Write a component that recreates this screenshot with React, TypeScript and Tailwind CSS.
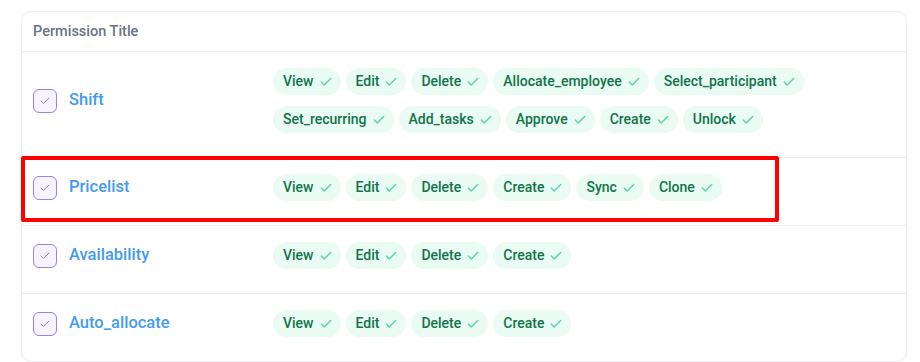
import { Check } from 'lucide-react';

type Permission = {
  title: string;
  actions: string[];
};

const permissions: Permission[] = [
  {
    title: 'Shift',
    actions: ['View', 'Edit', 'Delete', 'Allocate_employee', 'Select_participant', 'Set_recurring', 'Add_tasks', 'Approve', 'Create', 'Unlock'],
  },
  { title: 'Pricelist', actions: ['View', 'Edit', 'Delete', 'Create', 'Sync', 'Clone'] },
  { title: 'Availability', actions: ['View', 'Edit', 'Delete', 'Create'] },
  { title: 'Auto_allocate', actions: ['View', 'Edit', 'Delete', 'Create'] },
];

function ActionPill({ label }: { label: string }) {
  return (
    <span className="inline-flex h-[27px] items-center gap-[5px] rounded-full bg-[#e9fbf2] pl-[10px] pr-[8px] text-[14px] font-medium text-[#12744a]">
      {label}
      <Check size={14} strokeWidth={2.5} className="text-[#58d3b4]" />
    </span>
  );
}

function PermissionRow({ permission }: { permission: Permission }) {
  return (
    <div className="flex items-center border-t border-[#eceef2] pt-4 pb-6">
      <div className="flex w-[251px] shrink-0 items-center gap-3 pl-[11px]">
        {/* チェックボックス */}
        <span className="flex h-6 w-6 items-center justify-center rounded-md border-[1.5px] border-[#9c80e2] bg-[#f7f3ff]">
          <Check size={12} strokeWidth={1.75} className="text-[#8b6fd6]" />
        </span>
        <span className="text-[16.5px] font-medium text-[#429bf2]">{permission.title}</span>
      </div>
      <div className="flex max-w-[580px] flex-wrap gap-x-[5px] gap-y-[11px]">
        {permission.actions.map((action) => (
          <ActionPill key={action} label={action} />
        ))}
      </div>
    </div>
  );
}

export default function App() {
  return (
    <div className="relative min-h-screen bg-white pt-[11px] pl-[21px] font-['Roboto','Liberation_Sans',sans-serif]">
      <div className="w-[886px] rounded-[10px] border border-[#eceef2] bg-white">
        <div className="flex h-[39px] items-center px-[11px] text-[14.5px] font-medium text-[#6b7385]">
          Permission Title
        </div>
        {permissions.map((p) => (
          <PermissionRow key={p.title} permission={p} />
        ))}
      </div>

      {/* 注釈の赤枠 */}
      <div className="absolute top-[156px] left-[21px] h-[66px] w-[758px] rounded-[2px] border-4 border-[#ff0000]" />
    </div>
  );
}
